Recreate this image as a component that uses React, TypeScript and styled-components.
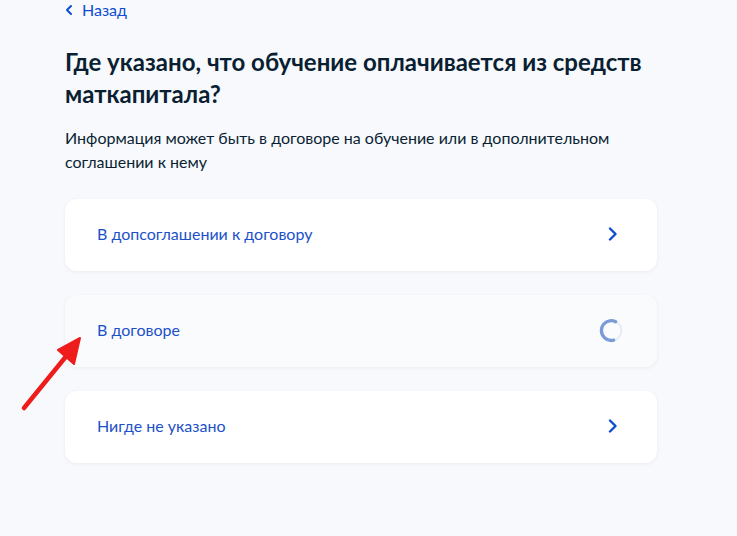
import React from "react";
import styled, { createGlobalStyle } from "styled-components";

const Global = createGlobalStyle`
  html, body { margin: 0; padding: 0; background: #f7f9fc; }
  body { font-family: Lato, "Noto Sans", sans-serif; -webkit-font-smoothing: antialiased; }
  * { box-sizing: border-box; }
`;

const Page = styled.div`
  position: relative;
  width: 737px;
  height: 536px;
  overflow: hidden;
  background: #f7f9fc;
  padding: 0 80px 0 65px;
`;

const Back = styled.a`
  display: flex;
  align-items: center;
  gap: 9px;
  height: 24px;
  margin-top: -2px;
  color: #0d4cd3;
  font-size: 16px;
  line-height: 24px;
  text-decoration: none;
`;

const Title = styled.h1`
  margin: 24px 0 0;
  font-size: 24px;
  line-height: 32px;
  font-weight: 700;
  color: #0b1f33;
  width: 600px;
`;

const Lead = styled.p`
  margin: 16px 0 0;
  font-size: 16px;
  line-height: 24px;
  color: #0b1f33;
  width: 590px;
`;

const List = styled.div`
  display: flex;
  flex-direction: column;
  gap: 24px;
  margin-top: 25px;
  width: 592px;
`;

const Card = styled.button<{ $loading?: boolean }>`
  display: flex;
  align-items: center;
  justify-content: space-between;
  height: 72px;
  padding: 0 37px 2px 32px;
  border: 0;
  border-radius: 12px;
  background: ${(p) => (p.$loading ? "#fafbfd" : "#ffffff")};
  box-shadow: 0 1px 4px rgba(11, 31, 51, 0.06);
  font-family: inherit;
  font-size: 16px;
  line-height: 24px;
  color: #1d51c9;
  text-align: left;
  cursor: pointer;
`;

const Spinner = styled.svg`
  width: 25px;
  height: 25px;
  margin-right: -4px;
`;

const Arrow = styled.svg`
  position: absolute;
  left: 18px;
  top: 334px;
  pointer-events: none;
`;

const Chevron = () => (
  <svg width="14" height="14" viewBox="0 0 14 14" fill="none">
    <path d="M4 1.5L9.5 7L4 12.5" stroke="#0d4cd3" strokeWidth="2.4" strokeLinecap="round" strokeLinejoin="round" />
  </svg>
);

export default function App() {
  return (
    <>
      <Global />
      <Page>
        <Back href="#">
          <svg width="8" height="12" viewBox="0 0 8 12" fill="none">
            <path d="M6 2L2 6L6 10" stroke="#0d4cd3" strokeWidth="2" strokeLinecap="round" strokeLinejoin="round" />
          </svg>
          Назад
        </Back>
        <Title>Где указано, что обучение оплачивается из средств маткапитала?</Title>
        <Lead>Информация может быть в договоре на обучение или в дополнительном соглашении к нему</Lead>
        <List>
          <Card>
            В допсоглашении к договору
            <Chevron />
          </Card>
          <Card $loading>
            В договоре
            <Spinner viewBox="0 0 24 24" fill="none">
              <circle cx="12" cy="12" r="9.5" stroke="#e8edf5" strokeWidth="2" />
              <path d="M16 3.5A9.5 9.5 0 1 0 14 21.3" stroke="#7a9ad8" strokeWidth="3.2" strokeLinecap="round" />
            </Spinner>
          </Card>
          <Card>
            Нигде не указано
            <Chevron />
          </Card>
        </List>
        <Arrow width="70" height="80" viewBox="0 0 70 80">
          <path d="M6 74L50 20" stroke="#ef1c1c" strokeWidth="4.5" strokeLinecap="round" />
          <path d="M62 4L40 16L56 30Z" fill="#ef1c1c" stroke="#ef1c1c" strokeWidth="2" strokeLinejoin="round" />
        </Arrow>
      </Page>
    </>
  );
}
